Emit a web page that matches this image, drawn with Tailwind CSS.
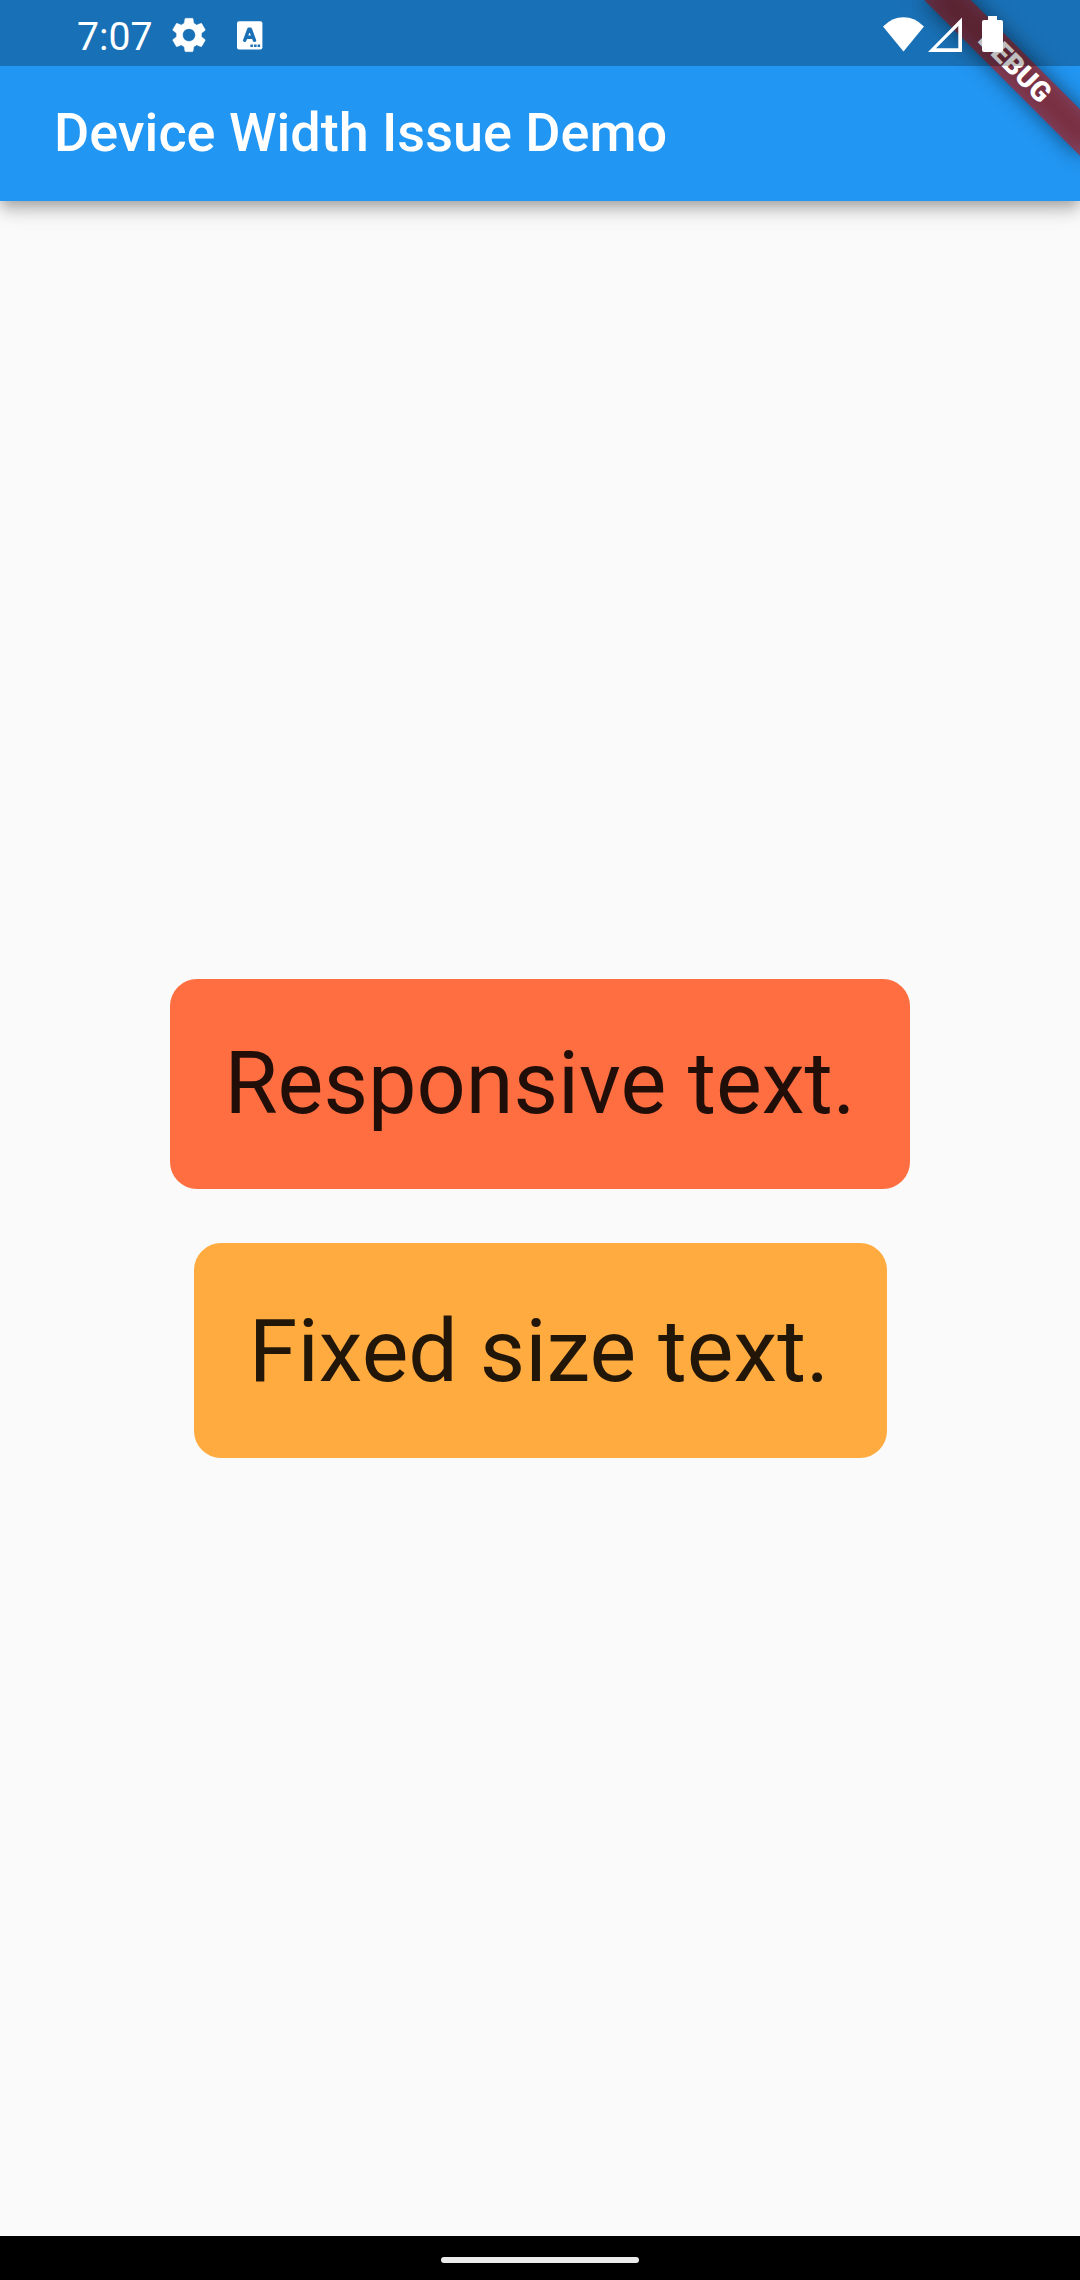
<!DOCTYPE html>
<html lang="en">
<head>
<meta charset="utf-8">
<title>Device Width Issue Demo</title>
<script src="https://cdn.jsdelivr.net/npm/@tailwindcss/browser@4"></script>
</head>
<body class="relative flex h-[2280px] w-[1080px] flex-col overflow-hidden bg-[#fafafa] font-[Roboto,sans-serif]">

  <!-- App bar, extending under the status bar -->
  <header class="flex h-[201px] shrink-0 items-center bg-[#2196f3] pt-[64px] pl-[54px] shadow-[0_5px_11px_-3px_rgba(0,0,0,0.2),0_11px_14px_0_rgba(0,0,0,0.14),0_3px_27px_0_rgba(0,0,0,0.12)]">
    <h1 class="whitespace-nowrap text-[54px] leading-[64px] font-medium text-white">Device Width Issue Demo</h1>
  </header>

  <main class="flex flex-1 flex-col items-center justify-center gap-[54px]">
    <div class="flex h-[210px] w-[740.6px] items-center justify-center rounded-[27px] bg-[#ff6e40]">
      <p class="whitespace-nowrap text-[86.4px] leading-[102px] text-black/87">Responsive text.</p>
    </div>
    <div class="flex h-[214.6px] w-[693px] items-center justify-center rounded-[27px] bg-[#ffab40] pr-[2px]">
      <p class="whitespace-nowrap text-[88px] leading-[106px] text-black/87">Fixed size text.</p>
    </div>
  </main>

  <footer class="flex h-[44px] shrink-0 items-start justify-center bg-black pt-[21px]">
    <div class="h-[6px] w-[198px] rounded-full bg-[#ebebeb]"></div>
  </footer>

  <!-- Corner ribbon -->
  <div class="absolute top-0 right-0 h-[260px] w-[260px] overflow-hidden">
    <div class="absolute top-[49.5px] left-[84px] h-[33px] w-[220px] rotate-45 bg-black/50 blur-[10.8px]"></div>
    <div class="absolute top-[49.5px] left-[84px] flex h-[33px] w-[220px] rotate-45 items-center justify-center bg-[#b71c1c]/63 pb-[1.5px] pl-px text-[28px] leading-none font-black text-white">DEBUG</div>
  </div>

  <!-- Status bar -->
  <div class="absolute top-0 left-0 flex h-[66px] w-[1080px] justify-between bg-black/25 pl-[77px] text-white">
    <div class="flex items-center">
      <span class="w-[90.8px] pt-[8px] text-[39.2px] leading-[46px]">7:07</span>
      <svg class="mt-[4px] h-[42px] w-[42px]" viewBox="0 0 24 24" fill="currentColor"><path d="M19.14 12.94c.04-.3.06-.61.06-.94 0-.32-.02-.64-.07-.94l2.03-1.58c.18-.14.23-.41.12-.61l-1.92-3.32c-.12-.22-.37-.29-.59-.22l-2.39.96c-.5-.38-1.03-.7-1.62-.94l-.36-2.54c-.04-.24-.24-.41-.48-.41h-3.84c-.24 0-.43.17-.47.41l-.36 2.54c-.59.24-1.13.57-1.62.94l-2.39-.96c-.22-.08-.47 0-.59.22L2.74 8.87c-.12.21-.08.47.12.61l2.03 1.58c-.05.3-.09.63-.09.94s.02.64.07.94l-2.03 1.58c-.18.14-.23.41-.12.61l1.92 3.32c.12.22.37.29.59.22l2.39-.96c.5.38 1.03.7 1.62.94l.36 2.54c.05.24.24.41.48.41h3.84c.24 0 .44-.17.47-.41l.36-2.54c.59-.24 1.13-.56 1.62-.94l2.39.96c.22.08.47 0 .59-.22l1.92-3.32c.12-.22.07-.47-.12-.61l-2.01-1.58zM12 15.6c-1.98 0-3.6-1.62-3.6-3.6s1.62-3.6 3.6-3.6 3.6 1.62 3.6 3.6-1.62 3.6-3.6 3.6z" stroke="currentColor" stroke-width=".15"/></svg>
      <svg class="mt-[5px] ml-[27px] h-[29px] w-[26px]" viewBox="0 0 26 29">
        <rect y=".3" width="25.4" height="28.2" rx="2" fill="#fff"/>
        <path d="M7.700 19.300L11.900 8.200H13.300L17.500 19.300M9.500 16.200h6" fill="none" stroke="#1970b6" stroke-width="3.400" stroke-linecap="round" stroke-linejoin="round"/>
        <path d="M13.400 23.600h2.500v2.300h-2.500zM17.100 23.600h2.500v2.300h-2.500zM20.600 23.600h2.500v2.300h-2.500z" fill="#1970b6"/>
      </svg>
    </div>
    <svg class="h-[66px] w-[200px]" viewBox="880 0 200 66" fill="#fff">
      <path d="M883 26.600Q892 17.300 903.500 17.300Q915 17.300 924 26.600L903.500 51.500Z"/>
      <path fill-rule="evenodd" d="M928 52L962 17.500V52ZM936 48.300H958.300V26Z"/>
      <path d="M988 16h9v4h4a2 2 0 0 1 2 2v28a2 2 0 0 1-2 2h-17a2 2 0 0 1-2-2v-28a2 2 0 0 1 2-2h4z"/>
    </svg>
  </div>
</body>
</html>
